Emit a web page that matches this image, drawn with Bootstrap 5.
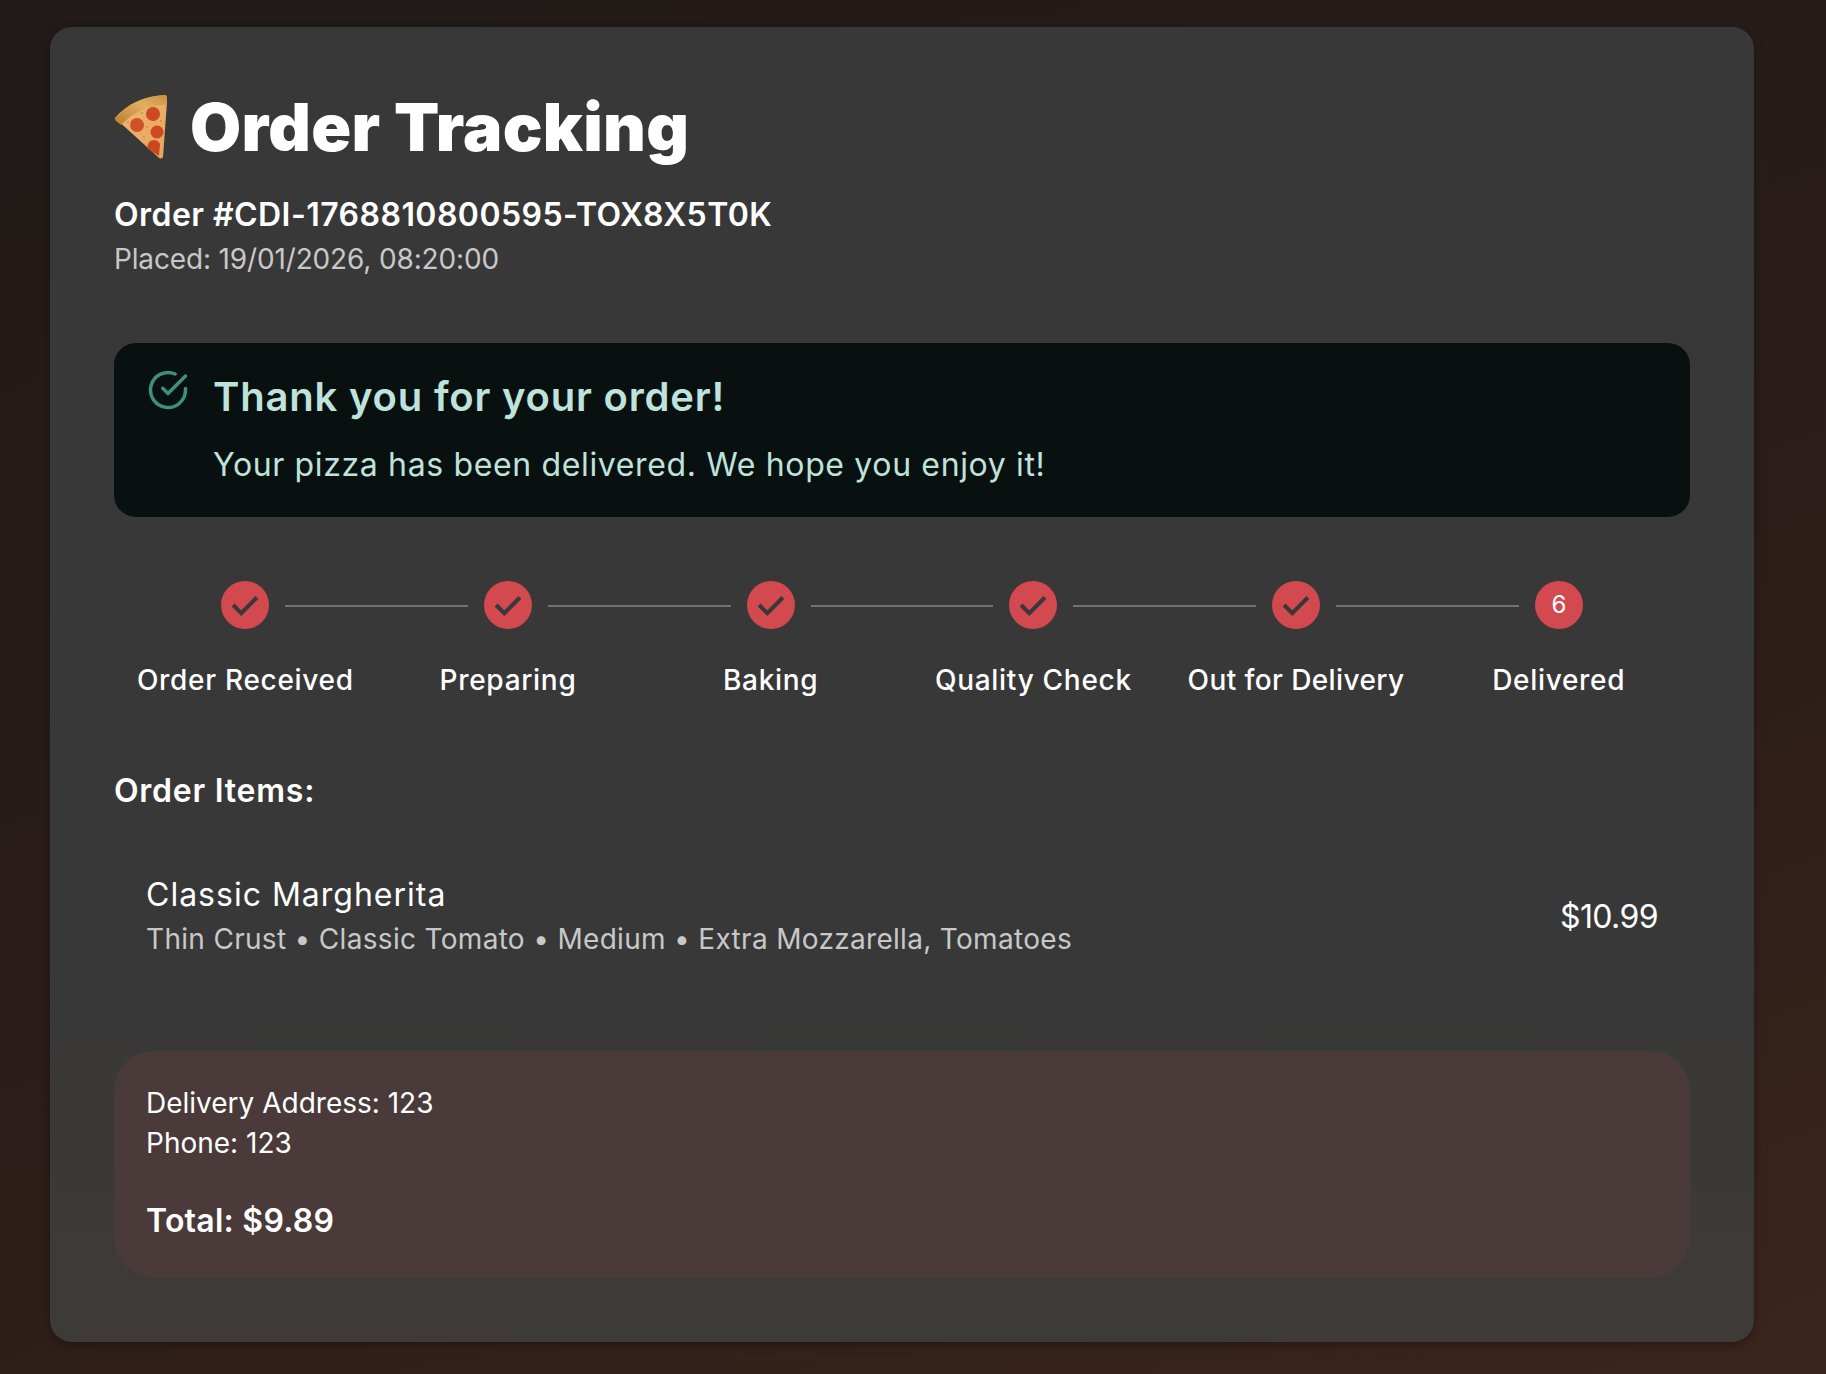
<!DOCTYPE html>
<html lang="en">
<head>
  <meta charset="UTF-8">
  <meta name="viewport" content="width=device-width, initial-scale=1.0">
  <title>Order Tracking</title>
  <link href="https://cdn.jsdelivr.net/npm/bootstrap@5.3.0/dist/css/bootstrap.min.css" rel="stylesheet">
  <style>
    html, body { height: 100%; }
    body {
      background: linear-gradient(160deg, #211a18 0%, #2c1d19 60%, #3b251c 100%);
      background-attachment: fixed;
      font-family: Inter, "Liberation Sans", sans-serif;
      color: #fff;
      padding: 27px 72px 32px 50px;
    }
    .track-card {
      background: linear-gradient(180deg, #383838 0%, #383838 70%, #3e3a38 100%);
      border: 0;
      border-radius: 22px;
      box-shadow: 0 3px 8px rgba(0, 0, 0, .3);
      height: 1315px;
      padding: 64px 64px 64px;
      color: #fff;
    }
    .track-title { font-size: 66px; font-weight: 900; line-height: 72px; letter-spacing: .3px; margin: 0; gap: 22px; }
    .pizza-icon { width: 54px; height: 66px; flex: none; }
    .order-no { font-size: 32px; font-weight: 600; line-height: 44px; margin: 30px 0 0; letter-spacing: .45px; }
    .placed { font-size: 28px; line-height: 44px; color: #c8c8c8; margin: 0; letter-spacing: -.15px; }
    .done-box { background: #081110; border-radius: 22px; margin-top: 62px; height: 174px; padding: 26px 33px; gap: 24px; color: #bfe3dc; }
    .done-icon { width: 42px; height: 42px; flex: none; color: #3f8f80; }
    .done-title { font-size: 40px; font-weight: 600; line-height: 56px; margin: 0; letter-spacing: .8px; }
    .done-text { font-size: 32px; line-height: 44px; margin: 18px 0 0; letter-spacing: .64px; }
    .step-dots { padding: 0 107px; margin-top: 64px; gap: 16px; }
    .step-dot { width: 48px; height: 48px; flex: none; border-radius: 50%; background: #d2494f; color: #fff; font-size: 24px; }
    .step-dot svg { width: 30px; height: 30px; }
    .step-line { flex: 1; height: 2px; background: #707070; margin-top: 2px; }
    .step-names { margin-top: 31px; }
    .step-name { flex: 1 1 0; font-size: 28px; font-weight: 500; line-height: 40px; text-align: center; letter-spacing: .7px; }
    .step-tight { letter-spacing: .4px; }
    .items-head { font-size: 32px; font-weight: 600; line-height: 44px; margin: 69px 0 0; letter-spacing: .75px; }
    .item-row { padding: 32px; margin-top: 28px; }
    .item-name { font-size: 32px; line-height: 44px; letter-spacing: 1px; }
    .item-sub { font-size: 28px; line-height: 44px; color: #c8c8c8; letter-spacing: .31px; }
    .item-price { font-size: 32px; line-height: 44px; letter-spacing: -.6px; }
    .sum-box { background: #4a3a3a; border-radius: 40px; margin-top: 58px; height: 228px; padding: 32px; font-size: 28px; line-height: 40px; }
    .sum-total { font-size: 32px; font-weight: 600; line-height: 44px; margin-top: 36px; letter-spacing: .25px; }
  </style>
</head>
<body>
  <div class="card track-card">
    <h1 class="track-title d-flex align-items-center">
      <svg class="pizza-icon" viewBox="0 0 54 66">
        <defs>
          <linearGradient id="crust" x1="0" y1="1" x2="1" y2="0">
            <stop offset="0" stop-color="#b97c2c"/><stop offset=".6" stop-color="#e0b060"/><stop offset="1" stop-color="#c98f40"/>
          </linearGradient>
          <linearGradient id="cheese" x1="0" y1="0" x2="1" y2="1">
            <stop offset="0" stop-color="#efb873"/><stop offset="1" stop-color="#e6a45e"/>
          </linearGradient>
        </defs>
        <path d="M1 24 C13 10 30 2 52 1 L53 8 L49 63 Q47 66 44 63 Z" fill="url(#cheese)"/>
        <path d="M1 24 C13 10 30 2 51 1 Q53 1 53 4 L52 11 C34 11 18 19 7 31 L2 27 Q0 25 1 24 Z" fill="url(#crust)"/>
        <circle cx="39" cy="20" r="7" fill="#cb4a24"/>
        <circle cx="23" cy="31" r="7" fill="#d0502a"/>
        <circle cx="43" cy="38" r="6.500" fill="#cd4a22"/>
        <path d="M34 55 A6.500 6.500 0 0 1 46 50 L45 62 Z" fill="#c94820"/>
        <g fill="#c9792f">
          <circle cx="28" cy="19" r=".8"/><circle cx="33" cy="33" r=".8"/><circle cx="30" cy="43" r=".8"/>
          <circle cx="36" cy="47" r=".8"/><circle cx="14" cy="28" r=".8"/><circle cx="47" cy="27" r=".8"/>
        </g>
      </svg>
      Order Tracking
    </h1>
    <p class="order-no">Order #CDI-1768810800595-TOX8X5T0K</p>
    <p class="placed">Placed: 19/01/2026, 08:20:00</p>

    <div class="done-box d-flex align-items-start">
      <svg class="done-icon" viewBox="0 0 24 24" fill="none" stroke="currentColor" stroke-width="2" stroke-linecap="round" stroke-linejoin="round">
        <path d="M22 11.08V12a10 10 0 1 1-5.93-9.14"/>
        <path d="M22 4 12 14.010l-3-3"/>
      </svg>
      <div>
        <h2 class="done-title">Thank you for your order!</h2>
        <p class="done-text">Your pizza has been delivered. We hope you enjoy it!</p>
      </div>
    </div>

    <div class="step-dots d-flex align-items-center">
      <div class="step-dot d-flex align-items-center justify-content-center"><svg viewBox="0 0 24 24" fill="none" stroke="#383838" stroke-width="3.200"><path d="M2.500 12 9 18.500 21.500 6"/></svg></div>
      <div class="step-line"></div>
      <div class="step-dot d-flex align-items-center justify-content-center"><svg viewBox="0 0 24 24" fill="none" stroke="#383838" stroke-width="3.200"><path d="M2.500 12 9 18.500 21.500 6"/></svg></div>
      <div class="step-line"></div>
      <div class="step-dot d-flex align-items-center justify-content-center"><svg viewBox="0 0 24 24" fill="none" stroke="#383838" stroke-width="3.200"><path d="M2.500 12 9 18.500 21.500 6"/></svg></div>
      <div class="step-line"></div>
      <div class="step-dot d-flex align-items-center justify-content-center"><svg viewBox="0 0 24 24" fill="none" stroke="#383838" stroke-width="3.200"><path d="M2.500 12 9 18.500 21.500 6"/></svg></div>
      <div class="step-line"></div>
      <div class="step-dot d-flex align-items-center justify-content-center"><svg viewBox="0 0 24 24" fill="none" stroke="#383838" stroke-width="3.200"><path d="M2.500 12 9 18.500 21.500 6"/></svg></div>
      <div class="step-line"></div>
      <div class="step-dot d-flex align-items-center justify-content-center">6</div>
    </div>
    <div class="step-names d-flex">
      <div class="step-name">Order Received</div>
      <div class="step-name">Preparing</div>
      <div class="step-name">Baking</div>
      <div class="step-name">Quality Check</div>
      <div class="step-name step-tight">Out for Delivery</div>
      <div class="step-name">Delivered</div>
    </div>

    <h3 class="items-head">Order Items:</h3>
    <div class="item-row d-flex justify-content-between align-items-center">
      <div>
        <div class="item-name">Classic Margherita</div>
        <div class="item-sub">Thin Crust • Classic Tomato • Medium • Extra Mozzarella, Tomatoes</div>
      </div>
      <div class="item-price">$10.99</div>
    </div>

    <div class="sum-box">
      <div>Delivery Address: 123</div>
      <div>Phone: 123</div>
      <div class="sum-total">Total: $9.89</div>
    </div>
  </div>
</body>
</html>
